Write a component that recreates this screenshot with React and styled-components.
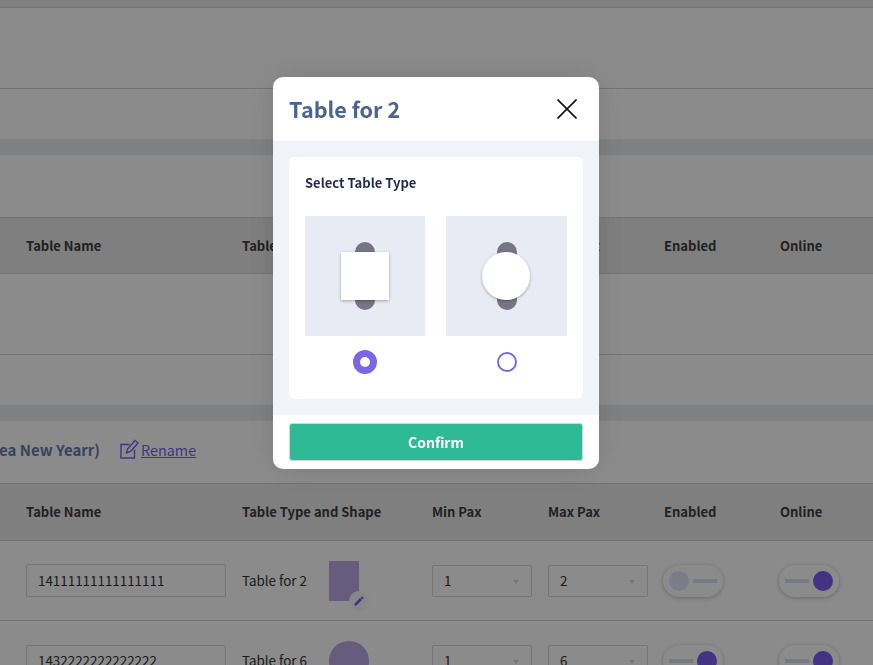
import React from 'react';
import styled, { createGlobalStyle } from 'styled-components';
import { MdEdit } from 'react-icons/md';

const Global = createGlobalStyle`
  html, body { margin: 0; padding: 0; height: 100%; overflow: hidden; background: #d6d6d6; }
  body { font-family: "Noto Sans CJK SC", "Noto Sans", sans-serif; color: #2b2b2b; }
  * { box-sizing: border-box; }
`;

const Page = styled.div`
  width: 873px;
  height: 665px;
  overflow: hidden;
`;

const Band = styled.div`
  height: 16px;
  background: #c2c5c7;
`;

const TopStrip = styled.div`
  height: 7px;
  background: #c7c7c7;
`;

const SectionHead = styled.div`
  height: 62px;
  padding-bottom: 5px;
  display: flex;
  align-items: center;
  gap: 20px;
`;

const SectionTitle = styled.div`
  width: 100px;
  display: flex;
  justify-content: flex-end;
  overflow: hidden;
  white-space: nowrap;
  font-size: 15px;
  font-weight: 700;
  color: #56698f;
`;

const RenameLink = styled.a`
  display: flex;
  align-items: center;
  gap: 2px;
  font-size: 14.4px;
  color: #6552cc;
  text-decoration: underline;
`;

const RenameIcon = styled.svg`
  width: 19px;
  height: 20px;
  display: block;
  margin-top: -2px;
`;

const Columns = styled.div`
  display: grid;
  grid-template-columns: 216px 190px 116px 116px 116px 1fr;
  padding-left: 26px;
  align-items: center;
`;

const HeadRow = styled(Columns)`
  height: ${p => p.$h}px;
  padding-bottom: ${p => p.$shift}px;
  border-top: 1px solid #b1b1b1;
  border-bottom: 1px solid #b1b1b1;
  background: #c3c3c3;
  font-size: 13px;
  font-weight: 700;
  color: #333;
`;

const Row = styled(Columns)`
  height: ${p => p.$h || 80}px;
  border-top: ${p => (p.$ruled ? '1px solid #b1b1b1' : 'none')};
  border-bottom: ${p => (p.$flat ? 'none' : '1px solid #b1b1b1')};
`;

const NameInput = styled.div`
  width: 200px;
  height: 33px;
  border: 1px solid #b4b4b4;
  border-radius: 2px;
  padding: 0 0 2px 11px;
  display: flex;
  align-items: center;
  font-size: 13.4px;
`;

const TypeCell = styled.div`
  display: flex;
  align-items: center;
  font-size: 13.4px;
`;

const TypeLabel = styled.span`
  width: 87px;
  margin-top: -2px;
`;

const Shape = styled.div`
  position: relative;
  width: ${p => (p.$round ? 40 : 30)}px;
  height: 40px;
  border-radius: ${p => (p.$round ? '50%' : '0')};
  background: #9b8ec2;
`;

const EditBadge = styled.span`
  position: absolute;
  right: -10px;
  bottom: -10px;
  width: 20px;
  height: 20px;
  border-radius: 50%;
  background: #cfcfcf;
  display: flex;
  align-items: center;
  justify-content: center;
  color: #6448d8;
`;

const PaxSelect = styled.div`
  width: 99.5px;
  height: 32px;
  border: 1px solid #b4b4b4;
  border-radius: 2px;
  padding: 0 11px 2px;
  display: flex;
  align-items: center;
  justify-content: space-between;
  font-size: 13.4px;
  &::after {
    content: "";
    border-left: 3.5px solid transparent;
    border-right: 3.5px solid transparent;
    border-top: 4px solid #b4b4b4;
    margin: 4px 1px 0 0;
  }
`;

const Toggle = styled.div`
  width: 60px;
  height: 32px;
  margin-left: -1px;
  padding: 0 6px;
  border-radius: 16px;
  background: #d6d6d6;
  box-shadow: 0 1px 4px rgba(0, 0, 0, 0.25);
  display: flex;
  flex-direction: ${p => (p.$on ? 'row-reverse' : 'row')};
  align-items: center;
  gap: 4px;
`;

const Knob = styled.span`
  width: 20px;
  height: 20px;
  border-radius: 50%;
  background: ${p => (p.$on ? '#6650c8' : '#bcc1d2')};
`;

const Track = styled.span`
  width: 25px;
  height: 4px;
  background: #b4bac8;
`;

const Overlay = styled.div`
  position: fixed;
  inset: 0 1px 0 0;
  background: rgba(0, 0, 0, 0.35);
  display: flex;
  justify-content: center;
  align-items: flex-start;
  padding-top: 77px;
  box-shadow: 1px 0 0 rgba(0, 0, 0, 0.35);
`;

const Modal = styled.div`
  width: 326px;
  border-radius: 10px;
  overflow: hidden;
  background: #fff;
  box-shadow: 0 0 30px rgba(0, 0, 0, 0.12);
`;

const ModalHead = styled.div`
  height: 64px;
  padding: 0 22px 2px 16px;
  display: flex;
  align-items: center;
  justify-content: space-between;
`;

const ModalTitle = styled.h2`
  margin: 0;
  font-size: 21.6px;
  font-weight: 600;
  color: #4a6491;
`;

const CloseIcon = styled.svg`
  width: 20px;
  height: 20px;
  display: block;
  margin-top: 2px;
`;

const ModalBody = styled.div`
  padding: 16px;
  background: #f0f3f8;
`;

const Card = styled.div`
  height: 242px;
  padding: 16px;
  border-radius: 5px;
  background: #fff;
`;

const CardLabel = styled.div`
  height: 20px;
  line-height: 20px;
  font-size: 13px;
  font-weight: 700;
  color: #1f2a52;
`;

const TypeGrid = styled.div`
  margin-top: 23px;
  display: grid;
  grid-template-columns: 120px 121px;
  column-gap: 21px;
`;

const TypeOption = styled.div`
  display: flex;
  flex-direction: column;
  align-items: center;
`;

const Tile = styled.div`
  position: relative;
  width: 100%;
  height: 120px;
  background: #e8ebf3;
  display: flex;
  align-items: center;
  justify-content: center;
`;

const Seats = styled.span`
  width: 20px;
  height: 68px;
  border-radius: 10px;
  background: #777486;
`;

const TableTop = styled.span`
  position: absolute;
  top: 36px;
  left: 36px;
  width: 48px;
  height: 48px;
  background: #fff;
  border-radius: ${p => (p.$round ? '50%' : '0')};
  box-shadow: 0 1px 3px rgba(0, 0, 0, 0.3);
`;

const RadioSlot = styled.div`
  height: 52px;
  display: flex;
  align-items: center;
  justify-content: center;
`;

const Radio = styled.span`
  display: block;
  border-radius: 50%;
  width: ${p => (p.$checked ? 24 : 20)}px;
  height: ${p => (p.$checked ? 24 : 20)}px;
  background: #fff;
  border: ${p => (p.$checked ? '7px' : '2px')} solid #7b66e8;
`;

const ModalFoot = styled.div`
  height: 54px;
  padding: 8px 16px 0;
`;

const ConfirmButton = styled.button`
  width: 100%;
  height: 38px;
  border: 1px solid #cfd6d4;
  border-radius: 3px;
  background: #2dba94;
  color: #fff;
  font-family: inherit;
  font-size: 14px;
  font-weight: 700;
  padding: 0;
`;

const headers = ['Table Name', 'Table Type and Shape', 'Min Pax', 'Max Pax', 'Enabled', 'Online'];

const Head = ({ h, shift }) => (
  <HeadRow $h={h} $shift={shift}>
    {headers.map(t => <div key={t}>{t}</div>)}
  </HeadRow>
);

const TableRow = ({ name, type, min, max, enabled, round, flat }) => (
  <Row $flat={flat}>
    <NameInput>{name}</NameInput>
    <TypeCell>
      <TypeLabel>{type}</TypeLabel>
      <Shape $round={round}>
        {!round && <EditBadge><MdEdit size={12} /></EditBadge>}
      </Shape>
    </TypeCell>
    <PaxSelect>{min}</PaxSelect>
    <PaxSelect>{max}</PaxSelect>
    <Toggle $on={enabled}><Knob $on={enabled} /><Track /></Toggle>
    <Toggle $on><Knob $on /><Track /></Toggle>
  </Row>
);

export default function App() {
  return (
    <>
      <Global />
      <Page>
        <TopStrip />
        <Row $h={82} $ruled />
        <Row $h={50} $flat />
        <Band />
        <SectionHead />
        <Head h={57} shift={0} />
        <Row $h={81} />
        <Row $h={50} $flat />
        <Band />
        <SectionHead>
          <SectionTitle>ea New Yearr)</SectionTitle>
          <RenameLink>
            <RenameIcon viewBox="0 0 19 20" fill="none" stroke="currentColor" strokeWidth="1.4">
              <path d="M9.5 5.5 H1 V19 H14.5 V10.5" />
              <path d="M6.5 14 L7.5 10 L15 1.5 L18 4 L10.5 12.5 Z" />
            </RenameIcon>
            Rename
          </RenameLink>
        </SectionHead>
        <Head h={58} shift={2} />
        <TableRow name="14111111111111111" type="Table for 2" min="1" max="2" />
        <TableRow name="1432222222222222" type="Table for 6" min="1" max="6" enabled round flat />
      </Page>
      <Overlay>
        <Modal>
          <ModalHead>
            <ModalTitle>Table for 2</ModalTitle>
            <CloseIcon viewBox="0 0 20 20" fill="none" stroke="#111" strokeWidth="1.6">
              <path d="M0.5 0.5 L19.5 19.5 M19.5 0.5 L0.5 19.5" />
            </CloseIcon>
          </ModalHead>
          <ModalBody>
            <Card>
              <CardLabel>Select Table Type</CardLabel>
              <TypeGrid>
                <TypeOption>
                  <Tile><Seats /><TableTop /></Tile>
                  <RadioSlot><Radio $checked /></RadioSlot>
                </TypeOption>
                <TypeOption>
                  <Tile><Seats /><TableTop $round /></Tile>
                  <RadioSlot><Radio /></RadioSlot>
                </TypeOption>
              </TypeGrid>
            </Card>
          </ModalBody>
          <ModalFoot>
            <ConfirmButton>Confirm</ConfirmButton>
          </ModalFoot>
        </Modal>
      </Overlay>
    </>
  );
}
